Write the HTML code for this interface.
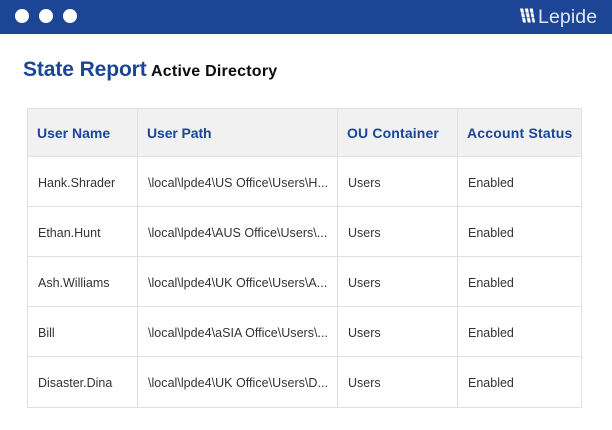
<!DOCTYPE html>
<html><head><meta charset="utf-8"><style>
html,body{margin:0;padding:0;background:#fff}
#p{position:relative;width:612px;height:430px;overflow:hidden;background:#fff;font-family:"Liberation Sans",sans-serif}
#p div{position:absolute;white-space:nowrap}
.h{top:108px;height:48px;line-height:50px;font-size:14px;font-weight:700;color:#1c4596}
.c{font-size:12.5px;color:#333;height:20px;line-height:20px}
.v{width:1px;top:108px;height:300px;background:#e0e0e0}
.l{height:1px;left:27px;width:555px;background:#e0e0e0}
.dot{width:14px;height:14px;border-radius:50%;background:#fff;top:9px}
.u{letter-spacing:.03px}
</style></head><body><div id="p">
<div style="left:0;top:0;width:612px;height:34px;background:#1c4596"></div>
<div class="dot" style="left:15px"></div><div class="dot" style="left:39px"></div><div class="dot" style="left:63px"></div>
<svg style="position:absolute;left:520px;top:8px" width="15" height="15" viewBox="0 0 15 15"><path fill="#fff" d="M0 0.500H3.200L6 14.500H3ZM4.800 0.500H8L10.800 14.500H7.800ZM9.600 0.500H12.800L15 14.500H12.600Z"/><path fill="#1c4596" d="M0 4.700H15V5.300H0ZM0 9.500H15V10.100H0Z"/></svg>
<div style="left:538px;top:4px;font-size:19.5px;line-height:26px;color:#dfe6f3;letter-spacing:.1px">Lepide</div>
<div style="left:23px;top:57px;font-size:21px;line-height:26px;font-weight:700;color:#1c4596;letter-spacing:-.1px">State Report</div>
<div style="left:151px;top:61px;font-size:16px;line-height:22px;font-weight:700;color:#0c0c0c;letter-spacing:.23px">Active Directory</div>
<div style="left:27px;top:108px;width:555px;height:48px;background:#f1f1f1"></div>
<div class="l" style="top:108px"></div><div class="l" style="top:156px"></div><div class="l" style="top:206px"></div><div class="l" style="top:256px"></div><div class="l" style="top:306px"></div><div class="l" style="top:356px"></div><div class="l" style="top:407px"></div>
<div class="v" style="left:27px"></div><div class="v" style="left:137px"></div><div class="v" style="left:337px"></div><div class="v" style="left:457px"></div><div class="v" style="left:581px"></div>
<div class="h" style="left:37px">User Name</div><div class="h" style="left:147px;letter-spacing:-.1px">User Path</div><div class="h" style="left:347px;letter-spacing:.15px">OU Container</div><div class="h" style="left:467px;letter-spacing:.2px">Account Status</div>

<div class="c" style="left:38px;top:173px">Hank.Shrader</div><div class="c u" style="left:148px;top:173px">\local\lpde4\US Office\Users\H...</div><div class="c" style="left:348px;top:173px">Users</div><div class="c" style="left:468px;top:173px">Enabled</div>
<div class="c" style="left:38px;top:223px">Ethan.Hunt</div><div class="c u" style="left:148px;top:223px">\local\lpde4\AUS Office\Users\...</div><div class="c" style="left:348px;top:223px">Users</div><div class="c" style="left:468px;top:223px">Enabled</div>
<div class="c" style="left:38px;top:273px">Ash.Williams</div><div class="c u" style="left:148px;top:273px">\local\lpde4\UK Office\Users\A...</div><div class="c" style="left:348px;top:273px">Users</div><div class="c" style="left:468px;top:273px">Enabled</div>
<div class="c" style="left:38px;top:323px">Bill</div><div class="c u" style="left:148px;top:323px">\local\lpde4\aSIA Office\Users\...</div><div class="c" style="left:348px;top:323px">Users</div><div class="c" style="left:468px;top:323px">Enabled</div>
<div class="c" style="left:38px;top:373px">Disaster.Dina</div><div class="c u" style="left:148px;top:373px">\local\lpde4\UK Office\Users\D...</div><div class="c" style="left:348px;top:373px">Users</div><div class="c" style="left:468px;top:373px">Enabled</div>
</div></body></html>
